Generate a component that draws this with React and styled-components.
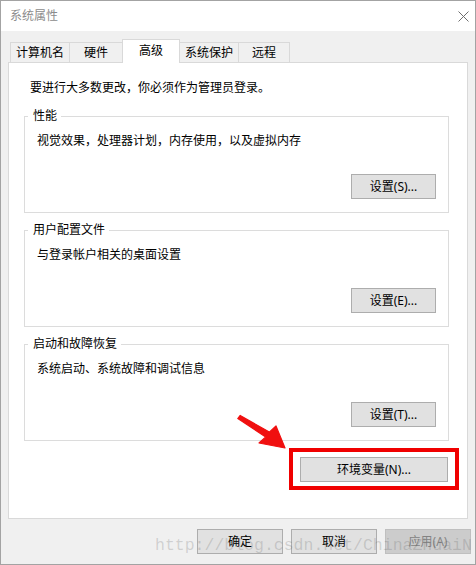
import React from "react";
import styled, { createGlobalStyle } from "styled-components";

const Global = createGlobalStyle`
  html, body { margin: 0; padding: 0; background: #ffffff; }
  * { box-sizing: border-box; }
`;

const Window = styled.div`
  position: relative;
  width: 476px;
  height: 565px;
  border: 1px solid #a3a3a3;
  background: #f0f0f0;
  display: flex;
  flex-direction: column;
  overflow: hidden;
  font-family: "Segoe UI", "Noto Sans", "Noto Sans CJK SC", sans-serif;
  font-size: 12px;
  color: #000;
`;

const TitleBar = styled.div`
  height: 30px;
  flex: none;
  background: #ffffff;
  display: flex;
  align-items: center;
  justify-content: space-between;
  padding: 0 6px 0 9px;
`;

const Title = styled.span`
  color: #8c8c8c;
  font-size: 12px;
  line-height: 16px;
`;

const TabStrip = styled.div`
  display: flex;
  align-items: flex-end;
  height: 24px;
  margin: 8px 0 -1px 0;
  padding-left: 9px;
  position: relative;
  z-index: 1;
`;

const Tab = styled.div`
  width: ${(p) => p.$w}px;
  height: ${(p) => (p.$active ? 24 : 21)}px;
  margin-left: -1px;
  border: 1px solid #d9d9d9;
  border-bottom: ${(p) => (p.$active ? "none" : "1px solid #d9d9d9")};
  background: ${(p) => (p.$active ? "#ffffff" : "#f0f0f0")};
  position: relative;
  z-index: ${(p) => (p.$active ? 2 : 1)};
  display: flex;
  align-items: center;
  justify-content: center;
  padding-bottom: ${(p) => (p.$active ? 2 : 0)}px;
  line-height: 16px;
  &:first-child { margin-left: 0; }
`;

const Panel = styled.div`
  margin-left: 7px;
  width: 460px;
  height: 457px;
  flex: none;
  border: 1px solid #d9d9d9;
  background: #ffffff;
  display: flex;
  flex-direction: column;
  padding: 0 8px 0 15px;
`;

const Intro = styled.div`
  margin: 17px 0 0 6px;
  line-height: 16px;
`;

const Group = styled.div`
  position: relative;
  height: 97px;
  margin: ${(p) => p.$top}px 10px 0 0;
  border: 1px solid #dcdcdc;
  padding: 16px 12px 13px 12px;
  display: flex;
  flex-direction: column;
`;

const Legend = styled.span`
  position: absolute;
  top: -9px;
  left: 3px;
  padding: 0 4px 0 5px;
  background: #ffffff;
  line-height: 16px;
`;

const GroupText = styled.div`
  line-height: 16px;
`;

const Button = styled.button`
  width: ${(p) => p.$w}px;
  height: 25px;
  flex: none;
  padding: 0;
  border: 1px solid ${(p) => (p.disabled ? "#bfbfbf" : "#adadad")};
  background: ${(p) => (p.disabled ? "#cccccc" : "#e1e1e1")};
  color: ${(p) => (p.disabled ? "#838383" : "#000000")};
  font-family: inherit;
  font-size: 12px;
  line-height: 16px;
  border-radius: 0;
`;

const GroupButton = styled(Button)`
  margin-top: auto;
  align-self: flex-end;
`;

const Highlight = styled.div`
  align-self: flex-end;
  margin-top: 7px;
  border: 4px solid #f00000;
  padding: 5px 7px 4px 7px;
  display: flex;
`;

const Footer = styled.div`
  display: flex;
  justify-content: flex-end;
  gap: 8px;
  margin-top: 10px;
  padding-right: 4px;
`;

const Watermark = styled.div`
  position: absolute;
  left: 154px;
  top: 535px;
  font-family: "Liberation Mono", monospace;
  font-size: 16.5px;
  line-height: 20px;
  color: rgba(90, 90, 90, 0.22);
  white-space: nowrap;
  pointer-events: none;
`;

const Arrow = styled.svg`
  position: absolute;
  left: 224px;
  top: 404px;
  pointer-events: none;
`;

const groups = [
  { title: "性能", text: "视觉效果，处理器计划，内存使用，以及虚拟内存", btn: "设置(S)...", top: 20 },
  { title: "用户配置文件", text: "与登录帐户相关的桌面设置", btn: "设置(E)...", top: 17 },
  { title: "启动和故障恢复", text: "系统启动、系统故障和调试信息", btn: "设置(T)...", top: 17 },
];

const tabs = [
  { label: "计算机名", w: 60 },
  { label: "硬件", w: 54 },
  { label: "高级", w: 58, active: true },
  { label: "系统保护", w: 60 },
  { label: "远程", w: 52 },
];

export default function App() {
  return (
    <>
      <Global />
      <Window>
        <TitleBar>
          <Title>系统属性</Title>
          <svg width="11" height="11" viewBox="0 0 11 11">
            <path d="M0.5 0.5 L10.5 10.5 M10.5 0.5 L0.5 10.5" stroke="#6e6e6e" strokeWidth="1" fill="none" />
          </svg>
        </TitleBar>
        <TabStrip>
          {tabs.map((t) => (
            <Tab key={t.label} $w={t.w} $active={t.active}>
              {t.label}
            </Tab>
          ))}
        </TabStrip>
        <Panel>
          <Intro>要进行大多数更改，你必须作为管理员登录。</Intro>
          {groups.map((g) => (
            <Group key={g.title} $top={g.top}>
              <Legend>{g.title}</Legend>
              <GroupText>{g.text}</GroupText>
              <GroupButton $w={85}>{g.btn}</GroupButton>
            </Group>
          ))}
          <Highlight>
            <Button $w={148}>环境变量(N)...</Button>
          </Highlight>
        </Panel>
        <Footer>
          <Button $w={86}>确定</Button>
          <Button $w={86}>取消</Button>
          <Button $w={86} disabled>应用(A)</Button>
        </Footer>
        <Arrow width="70" height="50" viewBox="0 0 70 50">
          <polygon
            points="15.2,10.4 44.3,27.1 51,21 60,43 34,38 40.7,31.9 12.8,13.6"
            fill="#f01010"
            stroke="#f01010"
            strokeWidth="1.2"
            strokeLinejoin="round"
          />
        </Arrow>
        <Watermark>http://blog.csdn.net/ChinaZhuaiN</Watermark>
      </Window>
    </>
  );
}
